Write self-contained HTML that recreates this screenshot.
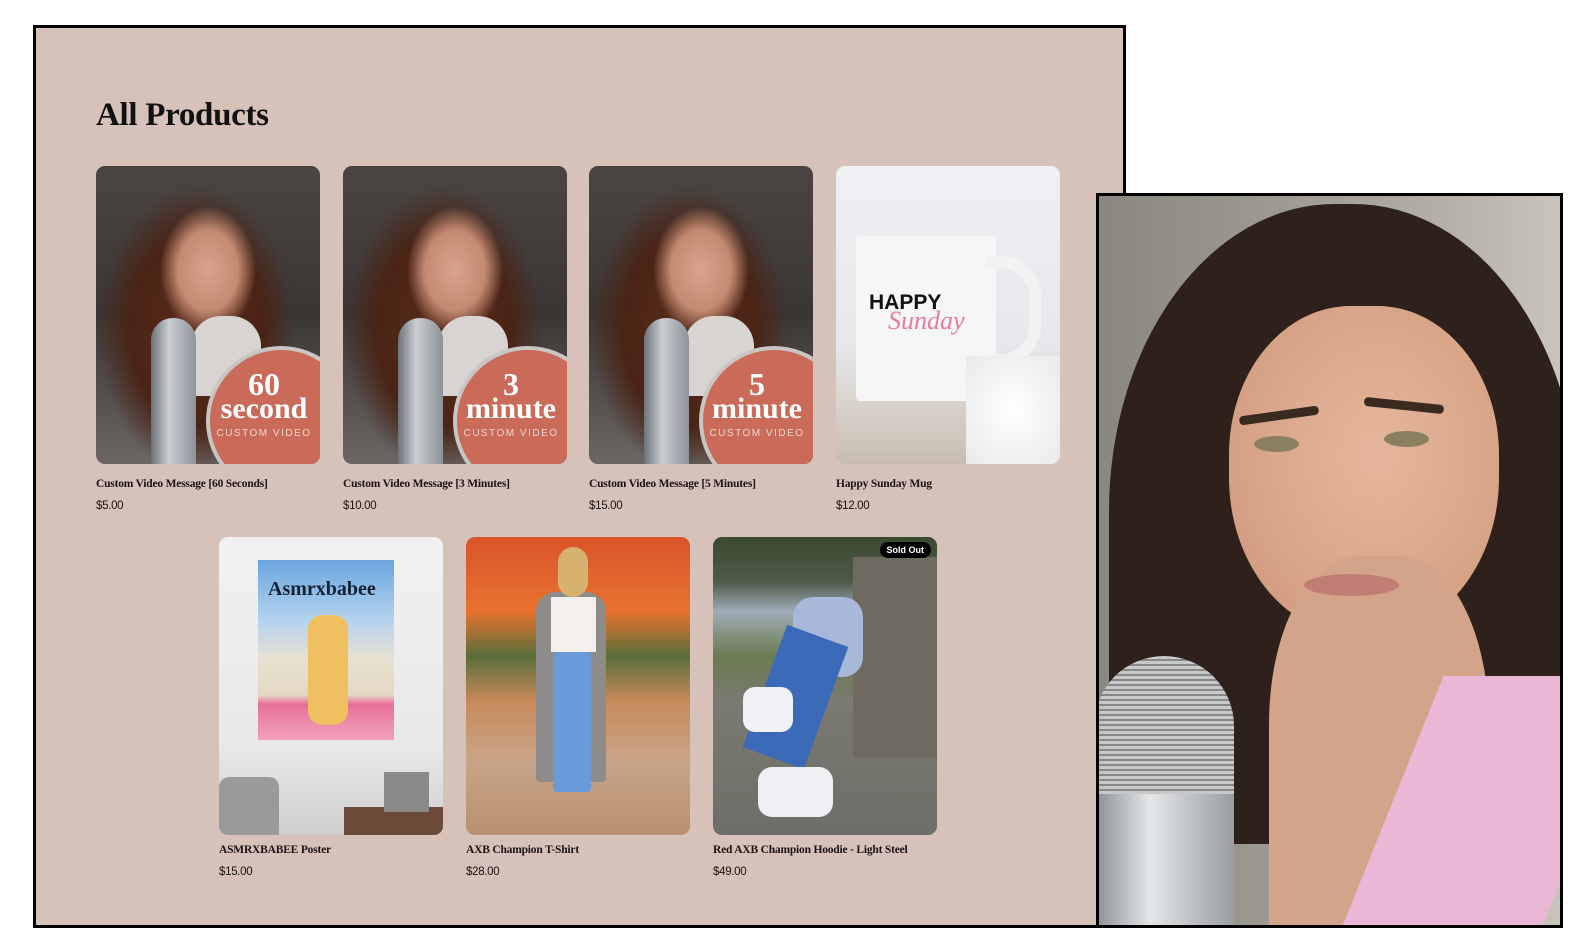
<!DOCTYPE html>
<html><head><meta charset="utf-8"><style>
*{margin:0;padding:0;box-sizing:border-box}
body{width:1584px;height:952px;background:#fff;position:relative;overflow:hidden;font-family:"Liberation Sans",sans-serif}
.main{position:absolute;left:33px;top:25px;width:1093px;height:903px;background:#d7c2ba;border:3px solid #000}
h1{position:absolute;left:96px;top:97px;font-family:"Liberation Serif",serif;font-weight:bold;font-size:33px;color:#111;letter-spacing:-0.3px}
.card{position:absolute;width:224px;height:298px;border-radius:9px;overflow:hidden}
.t{position:absolute;font-family:"Liberation Serif",serif;font-weight:bold;font-size:11.5px;color:#1a1212;white-space:nowrap;letter-spacing:-0.2px}
.p{position:absolute;font-size:11.5px;color:#1a1212;letter-spacing:-0.3px}
.vid{background:radial-gradient(ellipse 60px 80px at 50% 35%,#d9a48c 0,#c48a72 50%,transparent 80%),radial-gradient(ellipse 110px 160px at 45% 55%,#5a2c1c 0,#4a2416 60%,transparent 90%),linear-gradient(#4b4542,#3a3634 50%,#6b6664)}
.neck{position:absolute;left:95px;top:150px;width:70px;height:80px;background:#d8d4d2;border-radius:30px 30px 0 0}
.mic{position:absolute;left:55px;top:152px;width:45px;height:150px;background:linear-gradient(90deg,#6c7278,#c9ced3 40%,#8c9298);border-radius:22px 22px 4px 4px}
.badge{position:absolute;left:110px;top:180px;width:150px;height:150px;border-radius:50%;background:#c96b58;border:4px solid #c8c5c3;color:#fff;text-align:left}
.badge b{position:absolute;left:0;width:108px;text-align:center;font-family:"Liberation Serif",serif;font-weight:bold;line-height:1}
.badge small{position:absolute;left:0;width:108px;text-align:center;top:78px;font-size:10px;letter-spacing:1.5px;color:#f0d6cc}
.photo{position:absolute;left:1096px;top:193px;width:467px;height:735px;border:3px solid #000;overflow:hidden;background:linear-gradient(90deg,#8a8780,#a9a59c 60%,#c8c4bc)}
</style></head><body>
<div class="main"></div>
<h1>All Products</h1>

<div class="card vid" style="left:96px;top:166px"><div class="neck"></div><div class="mic"></div><div class="badge"><b style="top:18px;font-size:32px">60</b><b style="top:44px;font-size:30px">second</b><small>CUSTOM VIDEO</small></div></div>
<div class="t" style="left:96px;top:478px">Custom Video Message [60 Seconds]</div><div class="p" style="left:96px;top:500px">$5.00</div>

<div class="card vid" style="left:343px;top:166px"><div class="neck"></div><div class="mic"></div><div class="badge"><b style="top:18px;font-size:32px">3</b><b style="top:44px;font-size:30px">minute</b><small>CUSTOM VIDEO</small></div></div>
<div class="t" style="left:343px;top:478px">Custom Video Message [3 Minutes]</div><div class="p" style="left:343px;top:500px">$10.00</div>

<div class="card vid" style="left:589px;top:166px"><div class="neck"></div><div class="mic"></div><div class="badge"><b style="top:18px;font-size:32px">5</b><b style="top:44px;font-size:30px">minute</b><small>CUSTOM VIDEO</small></div></div>
<div class="t" style="left:589px;top:478px">Custom Video Message [5 Minutes]</div><div class="p" style="left:589px;top:500px">$15.00</div>

<div class="card" style="left:836px;top:166px;background:linear-gradient(#eef0f3,#e6e8ec 60%,#d9d3cc 80%,#c8bcb0)">
 <div style="position:absolute;left:20px;top:70px;width:140px;height:165px;background:#f6f6f6;border-radius:4px"></div>
 <div style="position:absolute;left:150px;top:90px;width:55px;height:110px;border:12px solid #f2f2f2;border-left:none;border-radius:0 40px 40px 0"></div>
 <div style="position:absolute;left:130px;top:190px;width:94px;height:108px;background:radial-gradient(#fff,#e9e9ec)"></div>
 <div style="position:absolute;left:33px;top:125px;font-weight:bold;font-size:21px;color:#111">HAPPY</div>
 <div style="position:absolute;left:52px;top:140px;font-family:'Liberation Serif',serif;font-style:italic;font-size:26px;color:#e87aa0">Sunday</div>
</div>
<div class="t" style="left:836px;top:478px">Happy Sunday Mug</div><div class="p" style="left:836px;top:500px">$12.00</div>

<div class="card" style="left:219px;top:537px;background:linear-gradient(#f1f1f1,#e8e8e8 70%,#cfcfcf)">
 <div style="position:absolute;left:39px;top:23px;width:136px;height:180px;background:linear-gradient(#6aa6e0,#b8d4ee 35%,#e8e0d0 55%,#e4d8c4 75%,#e8709a 80%,#f0a0bc)">
  <div style="position:absolute;left:10px;top:18px;font-family:'Liberation Serif',serif;font-weight:bold;font-size:20px;color:#123">Asmrxbabee</div>
  <div style="position:absolute;left:50px;top:55px;width:40px;height:110px;background:#f0c060;border-radius:14px"></div>
 </div>
 <div style="position:absolute;left:0;top:240px;width:60px;height:58px;background:#9a9a9a;border-radius:10px 10px 0 0"></div>
 <div style="position:absolute;left:125px;top:270px;width:99px;height:28px;background:#6b4a3a"></div>
 <div style="position:absolute;left:165px;top:235px;width:45px;height:40px;background:#8a8a8a"></div>
</div>
<div class="t" style="left:219px;top:844px">ASMRXBABEE Poster</div><div class="p" style="left:219px;top:866px">$15.00</div>

<div class="card" style="left:466px;top:537px;background:linear-gradient(#d8542a,#e8722e 25%,#5a6e3a 40%,#c88a5a 55%,#c9a488 75%,#b89070)">
 <div style="position:absolute;left:70px;top:55px;width:70px;height:190px;background:#8e8c8a;border-radius:20px 20px 4px 4px"></div>
 <div style="position:absolute;left:85px;top:60px;width:45px;height:55px;background:#f4f0ee"></div>
 <div style="position:absolute;left:87px;top:115px;width:38px;height:140px;background:#6a9ad8;border-radius:4px"></div>
 <div style="position:absolute;left:92px;top:10px;width:30px;height:50px;background:#d8b070;border-radius:15px"></div>
</div>
<div class="t" style="left:466px;top:844px">AXB Champion T-Shirt</div><div class="p" style="left:466px;top:866px">$28.00</div>

<div class="card" style="left:713px;top:537px;background:linear-gradient(#3a4a30,#4e5a48 15%,#a0acb8 25%,#6a7a50 40%,#7a7a72 55%,#6e6e68)">
 <div style="position:absolute;left:140px;top:20px;width:84px;height:200px;background:#6e6a60"></div>
 <div style="position:absolute;left:80px;top:60px;width:70px;height:80px;background:#a8b8d8;border-radius:20px"></div>
 <div style="position:absolute;left:50px;top:95px;width:65px;height:130px;background:#3a6ab8;transform:rotate(20deg)"></div>
 <div style="position:absolute;left:30px;top:150px;width:50px;height:45px;background:#f0f2f6;border-radius:12px"></div>
 <div style="position:absolute;left:45px;top:230px;width:75px;height:50px;background:#eef0f4;border-radius:14px"></div>
 <div style="position:absolute;right:6px;top:5px;background:#000;color:#fff;font-size:9px;font-weight:bold;padding:3px 7px;border-radius:10px">Sold Out</div>
</div>
<div class="t" style="left:713px;top:844px">Red AXB Champion Hoodie - Light Steel</div><div class="p" style="left:713px;top:866px">$49.00</div>

<div class="photo">
 <div style="position:absolute;left:10px;top:8px;width:470px;height:640px;background:#2e201a;border-radius:48% 48% 20% 20%"></div>
 <div style="position:absolute;left:130px;top:110px;width:270px;height:330px;background:radial-gradient(ellipse at 55% 45%,#e6b69c,#d8a488 60%,#c8907a);border-radius:45% 45% 48% 48%"></div>
 <div style="position:absolute;left:170px;top:360px;width:220px;height:420px;background:#d4a48a;border-radius:40% 40% 0 0"></div>
 <div style="position:absolute;left:290px;top:480px;width:200px;height:270px;background:#eab8d6;transform:skewX(-22deg)"></div>
 <div style="position:absolute;left:140px;top:215px;width:80px;height:9px;background:#3a2a20;border-radius:4px;transform:rotate(-8deg)"></div>
 <div style="position:absolute;left:265px;top:205px;width:80px;height:9px;background:#3a2a20;border-radius:4px;transform:rotate(6deg)"></div>
 <div style="position:absolute;left:155px;top:240px;width:45px;height:16px;background:#8a8060;border-radius:50%"></div>
 <div style="position:absolute;left:285px;top:235px;width:45px;height:16px;background:#8a8060;border-radius:50%"></div>
 <div style="position:absolute;left:205px;top:378px;width:95px;height:22px;background:#c07e74;border-radius:50%"></div>
 <div style="position:absolute;left:-5px;top:460px;width:140px;height:150px;background:repeating-linear-gradient(#c8c8c8 0 3px,#888 3px 5px);border-radius:70px 70px 0 0"></div>
 <div style="position:absolute;left:-5px;top:598px;width:140px;height:140px;background:linear-gradient(90deg,#8a8e92,#e4e6e8 40%,#9a9ea2)"></div>
</div>
</body></html>
